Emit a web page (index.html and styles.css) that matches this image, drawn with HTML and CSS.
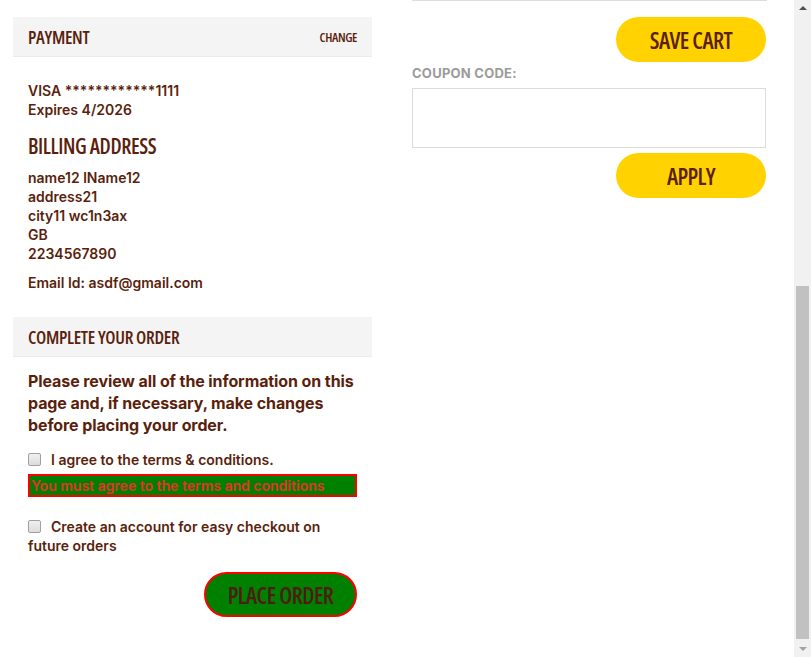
FILE: index.html
```html
<!DOCTYPE html>
<html lang="en">
<head>
<meta charset="utf-8">
<title>Checkout</title>
<link rel="stylesheet" href="styles.css">
</head>
<body>
<div class="window">
  <main class="checkout">
    <div class="col col-left">
      <section class="payment">
        <div class="section-head"><h2>Payment</h2><a class="change" href="#">Change</a></div>
        <div class="section-body">
          <p class="lines">VISA ************1111<br>Expires 4/2026</p>
          <h3 class="sub-title">Billing Address</h3>
          <p class="lines address">name12 lName12<br>address21<br>city11 wc1n3ax<br>GB<br>2234567890</p>
          <p class="lines email">Email Id: asdf@gmail.com</p>
        </div>
      </section>

      <section class="complete">
        <div class="section-head"><h2>Complete Your Order</h2></div>
        <div class="section-body">
          <p class="review">Please review all of the information on this page and, if necessary, make changes before placing your order.</p>
          <label class="check"><input type="checkbox"><span>I agree to the terms &amp; conditions.</span></label>
          <div class="error">You must agree to the terms and conditions</div>
          <label class="check check-account"><input type="checkbox"><span>Create an account for easy checkout on future orders</span></label>
          <div class="actions order-actions"><button class="btn btn-order" type="button">Place Order</button></div>
        </div>
      </section>
    </div>

    <div class="col col-right">
      <hr class="divider">
      <div class="actions save-actions"><button class="btn btn-yellow" type="button">Save Cart</button></div>
      <label class="coupon-label" for="coupon">Coupon Code:</label>
      <input class="coupon-input" id="coupon" type="text">
      <div class="actions apply-actions"><button class="btn btn-yellow" type="button">Apply</button></div>
    </div>
  </main>

  <div class="scrollbar" aria-hidden="true">
    <span class="sb-btn sb-up"></span>
    <span class="sb-track"><span class="sb-thumb"></span></span>
    <span class="sb-btn sb-down"></span>
  </div>
</div>
</body>
</html>
```
FILE: styles.css
```css
body{margin:0;font-family:Inter,"Noto Sans",sans-serif;font-size:14px;font-weight:600;color:#5a1f0d;background:#fff}
p,h2,h3{margin:0;padding:0}

.window{display:flex;height:657px;overflow:hidden}
.checkout{flex:1;display:grid;grid-template-columns:359px 355px;column-gap:40px;padding:0 0 40px 13px;align-items:start}

/* fake window scrollbar (page shown scrolled to the bottom) */
.scrollbar{width:17px;flex:none;display:flex;flex-direction:column;background:#f1f1f1}
.sb-btn{height:17px;display:flex;align-items:center;justify-content:center}
.sb-up::before{content:"";border-left:4px solid transparent;border-right:4px solid transparent;border-bottom:4px solid #505050;margin-top:-2px}
.sb-down::before{content:"";border-left:4px solid transparent;border-right:4px solid transparent;border-top:4px solid #a3a3a3;margin-top:1px}
.sb-track{flex:1;display:flex;flex-direction:column;padding:269px 2px 0}
.sb-thumb{height:353px;background:#c1c1c1}

.col-left{padding-top:17px}
.section-head{display:flex;justify-content:space-between;align-items:center;height:39px;padding:0 15px;background:#f4f4f4;border-bottom:1px solid #ebebeb}
.section-head h2{font-family:"Open Sans",sans-serif;font-stretch:75%;font-weight:600;font-size:18px;letter-spacing:-0.3px;text-transform:uppercase;padding-top:1px}
.change{font-family:"Open Sans",sans-serif;font-stretch:75%;font-weight:600;font-size:13px;letter-spacing:-0.4px;text-transform:uppercase;color:#5a1f0d;text-decoration:none}
.section-body{padding:0 15px}

.payment .section-body{padding-top:24px}
.lines{line-height:19px}
.sub-title{margin-top:15px;font-family:"Open Sans",sans-serif;font-stretch:75%;font-weight:600;font-size:21px;letter-spacing:-0.4px;line-height:24px;text-transform:uppercase}
.address{margin-top:10px}
.email{margin-top:10px}

.complete{margin-top:25px}
.review{margin-top:13px;font-size:16px;font-weight:700;line-height:22px;letter-spacing:-0.1px}
.check{display:block;line-height:19px;margin-top:14px}
.check input{appearance:none;-webkit-appearance:none;box-sizing:border-box;width:13px;height:13px;margin:0 10px 0 0;vertical-align:-1px;border:1px solid #a0a0a0;border-radius:2px;background:linear-gradient(#f0f0f0,#dcdcdc)}
.check-account{margin-top:20px}
.error{margin-top:5px;border:2px solid #f00;background:#008000;color:#e8302a;line-height:19px;padding:0 1px;font-weight:600}
.actions{display:flex;justify-content:flex-end}
.order-actions{margin-top:17px}

.btn{height:45px;border-radius:23px;font-family:"Open Sans",sans-serif;font-stretch:75%;font-weight:600;font-size:23px;letter-spacing:-0.6px;text-transform:uppercase;color:#5a1f0d;cursor:pointer;padding:0}
.btn-order{width:153px;background:#008000;border:2px solid #f00;color:#4f1c12}
.btn-yellow{width:150px;background:#ffd200;border:0;margin-right:1px}

.divider{margin:0;border:0;border-top:1px solid #ddd;height:0}
.save-actions{margin-top:16px}
.coupon-label{display:block;margin-top:3px;font-size:13px;font-weight:700;line-height:16px;letter-spacing:0.25px;text-transform:uppercase;color:#9b9b9b}
.coupon-input{display:block;box-sizing:border-box;width:354px;height:60px;margin:7px 0 0;border:1px solid #dcdcdc;padding:0 10px;font:inherit}
.apply-actions{margin-top:5px}
```
